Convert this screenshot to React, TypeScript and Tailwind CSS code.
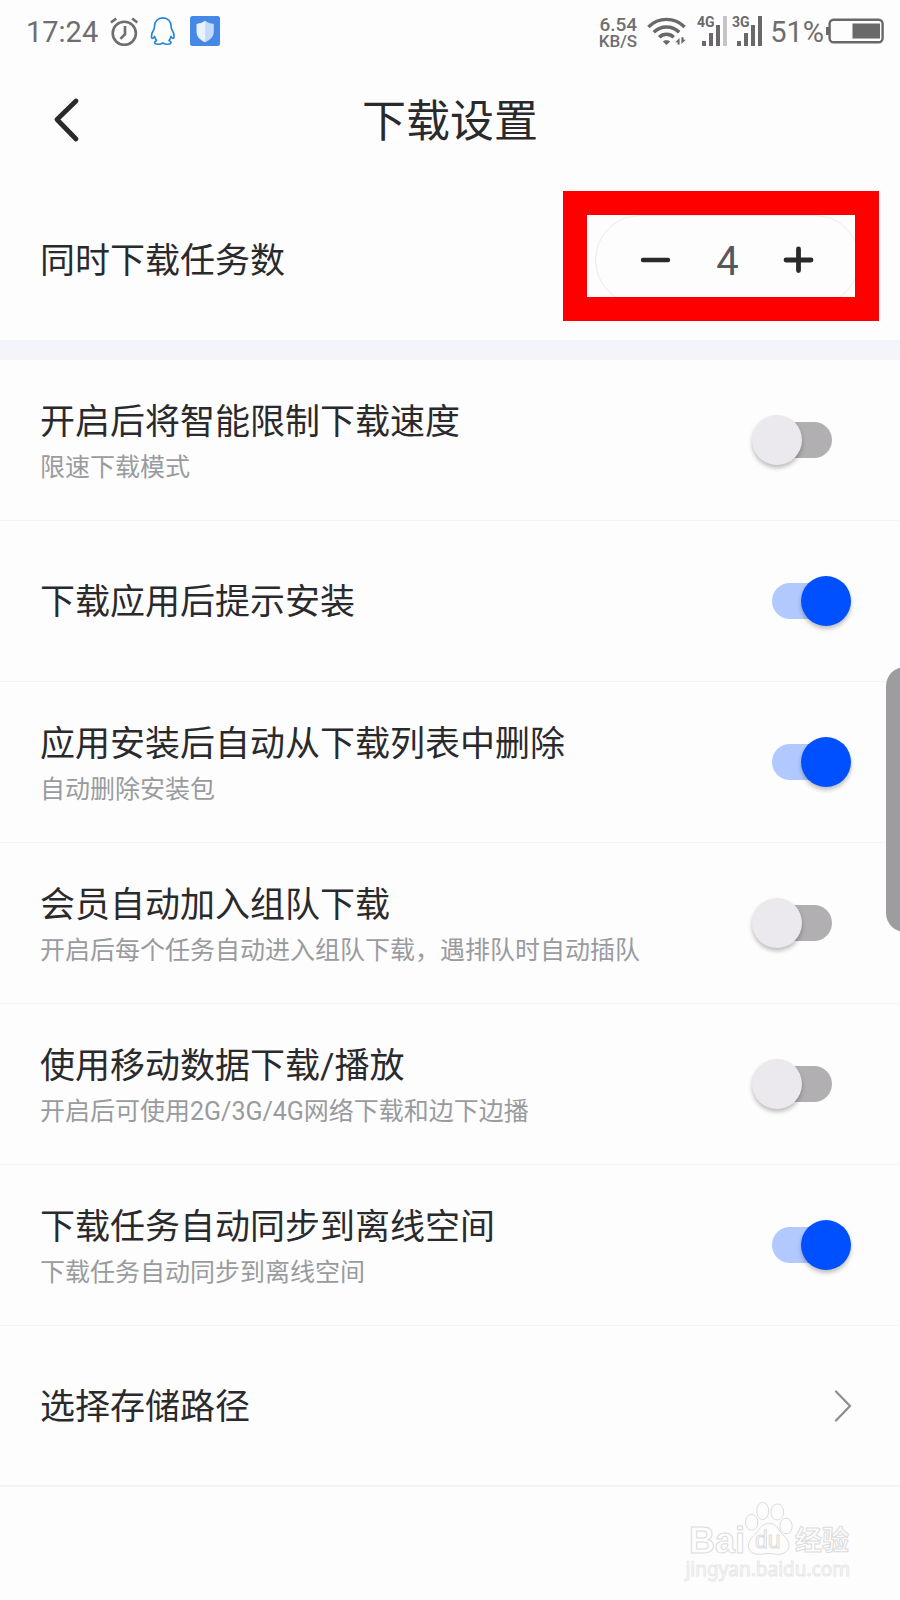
import { useState } from "react";

type Setting = {
  id: string;
  title: string;
  hint?: string;
  on: boolean;
};

const SETTINGS: Setting[] = [
  { id: "limit", title: "开启后将智能限制下载速度", hint: "限速下载模式", on: false },
  { id: "install", title: "下载应用后提示安装", on: true },
  { id: "cleanup", title: "应用安装后自动从下载列表中删除", hint: "自动删除安装包", on: true },
  { id: "team", title: "会员自动加入组队下载", hint: "开启后每个任务自动进入组队下载，遇排队时自动插队", on: false },
  { id: "mobile", title: "使用移动数据下载/播放", hint: "开启后可使用2G/3G/4G网络下载和边下边播", on: false },
  { id: "sync", title: "下载任务自动同步到离线空间", hint: "下载任务自动同步到离线空间", on: true },
];

function AlarmIcon() {
  return (
    <svg width="28" height="30" viewBox="0 0 28 30" fill="none" stroke="#6f6d70" strokeWidth="2.6">
      <circle cx="14.3" cy="17.3" r="11.6" />
      <path d="M15 10v8.2l-4.6 4.6M1 6.6 6.2 2.4M27.4 6.6l-5.2-4.2" />
    </svg>
  );
}

function PenguinIcon() {
  return (
    <svg width="28" height="30" viewBox="0 0 28 30" fill="none" stroke="#2283d2" strokeWidth="1.6" strokeLinejoin="round">
      <path d="M12.8 1.9c-5 0-8.3 3.6-8.3 8.4 0 1.4-.2 2.4-.8 3.5-1.4 2.2-2.3 4.2-2.2 6.4 0 1.2.4 2.2 1 2.2.8 0 1.6-1.2 2.1-2 .3 1.6 1 3 2 4.2-1.2.5-2 1.2-2 2 0 1.4 1.7 1.7 3.7 1.7 1.8 0 3.4-.5 4.5-1.4 1.1.9 2.7 1.4 4.5 1.4 2 0 3.7-.3 3.7-1.7 0-.8-.8-1.5-2-2 1-1.2 1.7-2.6 2-4.2.5.8 1.3 2 2.1 2 .6 0 1-1 1-2.2.1-2.2-.8-4.2-2.2-6.4-.6-1.1-.8-2.1-.8-3.5 0-4.8-3.3-8.4-8.3-8.4Z" />
    </svg>
  );
}

function ShieldIcon() {
  return (
    <svg width="30" height="30" viewBox="0 0 30 30">
      <rect width="30" height="30" rx="2.5" fill="#4688e6" />
      <path d="M15.2 4.8c2.6 2 5.3 2.9 8.6 3.2v8c0 4.5-3.5 7.8-8.6 10.2C10.1 23.8 6.7 20.5 6.7 16V8c3.3-.3 5.9-1.2 8.5-3.2Z" fill="#c3dafa" />
      <path d="M15.2 4.8v21.4C10.1 23.8 6.7 20.5 6.7 16V8c3.3-.3 5.9-1.2 8.5-3.2Z" fill="#e9f2fe" />
    </svg>
  );
}

function WifiIcon() {
  return (
    <svg width="39" height="30" viewBox="0 0 39 30" fill="none" stroke="#6a686b" strokeWidth="3.4">
      <path d="M1.4 11C11.5.8 27.5.8 37.6 11" />
      <path d="M6.8 16.2c7-7 18.4-7 25.4 0" />
      <path d="M12.2 21.2c4-4 10.6-4 14.6 0" />
      <path d="M15.8 25.5c2-1.8 5.4-1.8 7.4 0l-3.7 3.4Z" fill="#6a686b" stroke="none" />
      <path d="M32.6 22v6.6h-2v-2.4h-2.4Z M34.4 21.2v6.8l4.4-4.2h-2.2v-2.6Z" fill="#6a686b" stroke="none" />
    </svg>
  );
}

function SignalIcon({ label, last }: { label: string; last: string }) {
  return (
    <svg width="33" height="36" viewBox="-1 -3 33 36" fill="#6a686b">
      <text x="0" y="11" fontSize="14" fontWeight="700">{label}</text>
      <rect x="5" y="25" width="4" height="5" />
      <rect x="12" y="17" width="4" height="13" />
      <rect x="19" y="9" width="4" height="21" />
      <rect x="26" y="0" width="4" height="30" fill={last} />
    </svg>
  );
}

function BatteryIcon() {
  return (
    <svg width="58" height="26" viewBox="0 0 58 26" fill="#6a686b">
      <rect x="3.6" y="1.7" width="53" height="22.6" rx="4" fill="none" stroke="#6a686b" strokeWidth="2.4" />
      <rect x="0" y="9" width="3" height="8" />
      <rect x="26.5" y="5.5" width="27.5" height="15" />
    </svg>
  );
}

function StatusBar() {
  return (
    <div className="flex h-[60px] items-center justify-between pt-0.5 pl-[26px] pr-4 text-[29px] text-[#6f6d70]">
      <div className="flex items-center gap-3">
        <span className="pt-1">17:24</span>
        <AlarmIcon />
        <PenguinIcon />
        <ShieldIcon />
      </div>
      <div className="flex items-center gap-2.5">
        <div className="pt-1 text-right leading-4 font-medium">
          <div className="text-[19px]">6.54</div>
          <div className="text-[17px]">KB/S</div>
        </div>
        <WifiIcon />
        <div className="flex items-center gap-1.5">
          <div className="flex gap-0.5">
            <SignalIcon label="4G" last="#c6c5c6" />
            <SignalIcon label="3G" last="#6a686b" />
          </div>
          <div className="flex items-center gap-0.5">
            <span className="pt-1">51%</span>
            <BatteryIcon />
          </div>
        </div>
      </div>
    </div>
  );
}

function Header() {
  return (
    <header className="grid h-[120px] grid-cols-[1fr_auto_1fr] items-center px-[52px]">
      <button type="button" aria-label="返回" className="w-9 py-2">
        <svg width="32" height="48" viewBox="0 0 32 48" fill="none" stroke="#2a2a2d" strokeWidth="4.8" strokeLinecap="round" strokeLinejoin="round">
          <path d="M24 5 5 23.500 24 43" />
        </svg>
      </button>
      <h1 className="pt-1 text-[44px] leading-[60px]">下载设置</h1>
    </header>
  );
}

function TaskCount() {
  const [count, setCount] = useState(4);

  return (
    <section className="flex h-40 items-center justify-between px-10">
      <h2 className="pt-1 text-[35px] leading-[52px]">同时下载任务数</h2>
      <div className="relative flex h-[90px] w-[265px] items-center justify-between rounded-full border border-[#ebebf0] px-11">
        <button type="button" aria-label="减少" onClick={() => setCount(Math.max(1, count - 1))}>
          <svg width="32" height="32" viewBox="0 0 32 32" stroke="#2a2a2d" strokeWidth="4.4" strokeLinecap="round">
            <path d="M3 16h25" />
          </svg>
        </button>
        <output className="pt-1 text-[40px] leading-[52px] text-[#55585d]">{count}</output>
        <button type="button" aria-label="增加" onClick={() => setCount(count + 1)}>
          <svg width="32" height="32" viewBox="0 0 32 32" stroke="#2a2a2d" strokeWidth="4.8" strokeLinecap="round">
            <path d="M3 16h25M15.500 5v21.500" />
          </svg>
        </button>
        {/* highlight frame over the stepper */}
        <div className="pointer-events-none absolute -top-[25px] -right-5 -bottom-[17px] -left-[33px] border-[24px] border-[#ff0000]" />
      </div>
    </section>
  );
}

function SettingRow({ setting }: { setting: Setting }) {
  const [on, setOn] = useState(setting.on);

  return (
    <li className="flex h-[161px] items-center justify-between border-b border-[#f4f4f5] pl-10 pr-12">
      <label htmlFor={setting.id} className="pt-1">
        <span className="block text-[35px] leading-[52px]">{setting.title}</span>
        {setting.hint && (
          <span className="block text-[25px] leading-[38px] text-[#999b9f]">{setting.hint}</span>
        )}
      </label>
      <input
        id={setting.id}
        type="checkbox"
        role="switch"
        checked={on}
        onChange={() => setOn(!on)}
        className="relative h-[50px] w-[100px] shrink-0 appearance-none before:absolute before:inset-x-5 before:inset-y-[7px] before:rounded-full before:bg-[#b1afb2] after:absolute after:top-0 after:left-0 after:size-[50px] after:rounded-full after:bg-[#ebe9ed] after:shadow-[0_3px_4px_rgba(0,0,0,0.25)] checked:before:bg-[#b2c9ff] checked:after:left-[49px] checked:after:bg-[#0050ff]"
      />
    </li>
  );
}

function Watermark() {
  return (
    <footer className="flex flex-col items-end pt-3 pr-[50px] text-[#fdfdfd]">
      <svg width="163" height="58" viewBox="-3 0 163 58" fill="#fdfdfd" stroke="#dcdcdc" className="overflow-visible">
        <text x="-1" y="54" fontSize="36" fontWeight="700" fontFamily="Liberation Sans, sans-serif">Bai</text>
        <ellipse cx="72.7" cy="12" rx="6" ry="8.6" />
        <ellipse cx="87.3" cy="13" rx="6.4" ry="8" />
        <ellipse cx="61.7" cy="23.3" rx="6.2" ry="8" />
        <ellipse cx="96" cy="27" rx="6.2" ry="7.8" />
        <path d="M79 24.500c9 0 9 7.500 15 12.500s7 12.500 1 16.500c-5.500 3.500-10 1-16 1s-11.500 2.500-17-1c-5.500-4-4.500-11.500 1.500-16.500S70 24.500 79 24.500Z" />
        <text x="65" y="49" fontSize="23" fontFamily="Liberation Sans, sans-serif">du</text>
        <text x="105" y="51" fontSize="27" fontWeight="700">经验</text>
      </svg>
      <p className="font-['Noto_Sans',sans-serif] text-[19px] leading-6 [-webkit-text-stroke:1px_#e8e8e8]">jingyan.baidu.com</p>
    </footer>
  );
}

export default function App() {
  return (
    <div className="relative min-h-screen overflow-hidden bg-[#fdfdfd] font-[Roboto,'Noto_Sans_CJK_SC',sans-serif] text-[#2a2a2d]">
      <StatusBar />
      <Header />
      <main>
        <TaskCount />
        <div className="h-5 bg-[#f4f5fa]" />
        <ul>
          {SETTINGS.map((setting) => (
            <SettingRow key={setting.id} setting={setting} />
          ))}
        </ul>
        <a href="#path" className="flex h-[161px] items-center justify-between border-b-2 border-[#f4f4f5] pl-10 pr-12">
          <span className="pt-1 text-[35px] leading-[52px]">选择存储路径</span>
          <svg width="20" height="32" viewBox="0 0 20 32" fill="none" stroke="#8c8c92" strokeWidth="2.2" strokeLinecap="round">
            <path d="M4 1.500 18 16 4 30.500" />
          </svg>
        </a>
      </main>
      <Watermark />

      {/* edge panel handle */}
      <div className="absolute top-[667px] -right-6 h-[265px] w-[38px] rounded-[28px] bg-[#9e9c9e]" />
    </div>
  );
}
